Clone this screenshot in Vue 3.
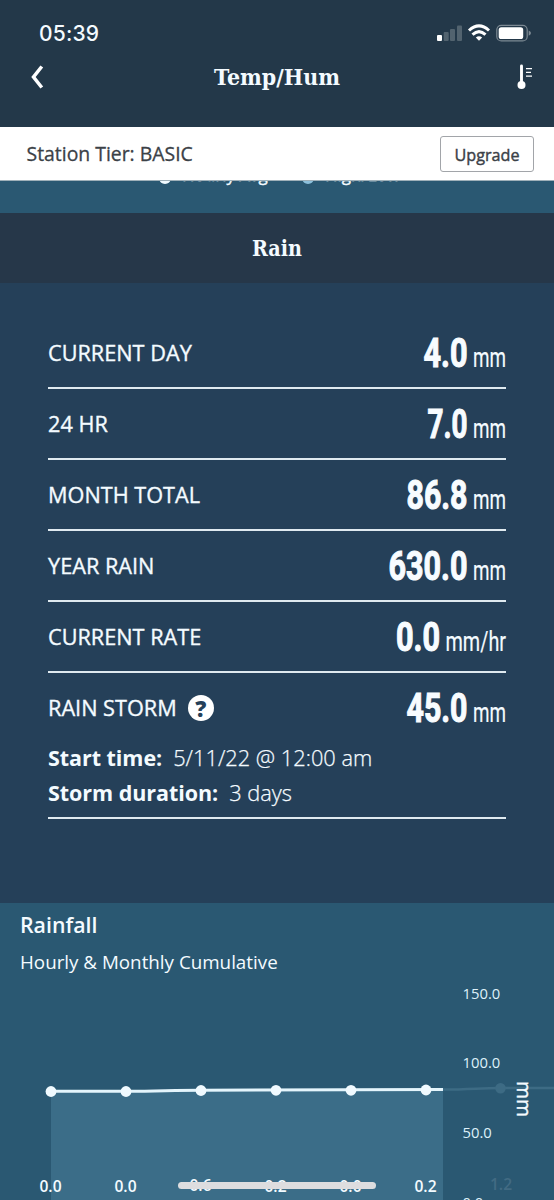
<template>
  <div class="screen">
    <header class="top-bar">
      <div class="status-bar">
        <span class="clock">05:39</span>
        <svg class="status-icons" width="96" height="20" viewBox="0 0 96 20">
          <rect x="1" y="12" width="5" height="6" rx="1" fill="#fff" />
          <rect x="7.7" y="9" width="5" height="9" rx="1" fill="#52636f" />
          <rect x="14" y="6" width="5" height="12" rx="1" fill="#52636f" />
          <rect x="21" y="2.500" width="5" height="15.500" rx="1" fill="#52636f" />
          <g fill="none" stroke="#fff" stroke-width="3">
            <path d="M33 7.500Q43 -1.700 53 7.500" />
            <path d="M36.500 11.600Q43 5.500 49.500 11.600" />
          </g>
          <path d="M39.800 14.500Q43 12 46.200 14.500L43 17.800Z" fill="#fff" />
          <rect x="60.800" y="2.300" width="30.400" height="15.600" rx="4.500" fill="none" stroke="#7c8993" stroke-width="1.200" />
          <rect x="62.700" y="4.200" width="24.500" height="11.800" rx="2.600" fill="#fff" />
          <path d="M92.700 7.500Q95 8.500 95 10Q95 11.800 92.700 12.800Z" fill="#7c8993" />
        </svg>
      </div>
      <nav class="nav-bar">
        <svg class="back" width="14" height="24" viewBox="0 0 14 24">
          <path d="M11.800 1.500L3.500 12L11.800 22.500" fill="none" stroke="#fff" stroke-width="3.500" />
        </svg>
        <svg class="title" width="128" height="32" viewBox="0 0 128 32">
          <text x="1" y="24" textLength="126" lengthAdjust="spacingAndGlyphs">Temp/Hum</text>
        </svg>
        <svg class="thermo" width="16" height="26" viewBox="0 0 16 26">
          <path d="M4.500 2V21" stroke="#fff" stroke-width="2.900" stroke-linecap="round" />
          <circle cx="4.500" cy="21" r="4" fill="#fff" />
          <path d="M9 4.700H15M9 8.400H14M9 12.200H15" stroke="#fff" stroke-width="1.300" />
        </svg>
      </nav>
    </header>

    <div class="tier-bar">
      <span class="tier">Station Tier: BASIC</span>
      <button type="button" class="upgrade">Upgrade</button>
    </div>

    <!-- bottom of the temp/hum chart, scrolled under the tier bar -->
    <div class="prev-chart">
      <div class="legend">
        <span class="dot"></span><span class="first">Hourly Avg</span>
        <span class="dot range"></span><span>High/Low</span>
      </div>
    </div>

    <h2 class="section-title">
      <svg width="52" height="32" viewBox="0 0 52 32">
        <text x="1" y="24" textLength="50" lengthAdjust="spacingAndGlyphs">Rain</text>
      </svg>
    </h2>

    <section class="rain">
      <div v-for="row in rows" :key="row.label" class="row" :class="{ storm: row.help }">
        <span class="label">{{ row.label }}</span>
        <span v-if="row.help" class="help">?</span>
        <svg class="reading" width="140" height="52" viewBox="0 0 140 52">
          <text class="num" :x="134.5 - row.unitWidth" y="41" text-anchor="end" :textLength="row.width"
            lengthAdjust="spacingAndGlyphs">{{ row.value }}</text>
          <text class="unit" x="140" y="41" text-anchor="end" :textLength="row.unitWidth"
            lengthAdjust="spacingAndGlyphs">{{ row.unit }}</text>
        </svg>
      </div>
      <div class="storm-info">
        <p><b>Start time:</b><span>5/11/22 @ 12:00 am</span></p>
        <p><b>Storm duration:</b><span>3 days</span></p>
      </div>
    </section>

    <section class="chart">
      <h3>Rainfall</h3>
      <p>Hourly &amp; Monthly Cumulative</p>
      <svg class="plot" width="554" height="220" viewBox="0 980 554 220">
        <path d="M443 1089.500C470 1089.500 480 1088 500 1088H554" class="faded-line" />
        <circle cx="500.500" cy="1088.300" r="5.300" fill="#3d6b84" />
        <text x="501" y="1190" class="bar-label faded">1.2</text>
        <path d="M51 1091H126C160 1091 170 1090 201 1090H443V1200H51Z" fill="#3b6d88" />
        <path d="M51 1091.300H126C160 1091.300 170 1090.300 201 1090.300L443 1089.500" class="line" />
        <g v-for="p in points" :key="p.x">
          <circle :cx="p.x" :cy="p.y" r="5.400" fill="#f0faff" />
          <text :x="p.x - 0.5" :y="p.labelY" class="bar-label">{{ p.value }}</text>
        </g>
        <text v-for="t in ticks" :key="t.y" x="462.500" :y="t.y" class="tick">{{ t.text }}</text>
        <text class="axis" transform="translate(516.500 1081) rotate(90)" textLength="36"
          lengthAdjust="spacingAndGlyphs">mm</text>
      </svg>
    </section>
    <div class="home-indicator"></div>
  </div>
</template>

<script setup>
// width / unitWidth squeeze the readings into the condensed look
const rows = [
  { label: 'CURRENT DAY', value: '4.0', unit: 'mm', width: 44, unitWidth: 33 },
  { label: '24 HR', value: '7.0', unit: 'mm', width: 40, unitWidth: 33 },
  { label: 'MONTH TOTAL', value: '86.8', unit: 'mm', width: 61, unitWidth: 33 },
  { label: 'YEAR RAIN', value: '630.0', unit: 'mm', width: 79, unitWidth: 33 },
  { label: 'CURRENT RATE', value: '0.0', unit: 'mm/hr', width: 44, unitWidth: 60.5 },
  { label: 'RAIN STORM', value: '45.0', unit: 'mm', width: 61, unitWidth: 33, help: true },
]

const points = [
  { x: 51, y: 1091.5, value: '0.0', labelY: 1191.5 },
  { x: 126, y: 1091.5, value: '0.0', labelY: 1191.5 },
  { x: 201, y: 1090.5, value: '0.6', labelY: 1190.5 },
  { x: 276, y: 1090.3, value: '0.2', labelY: 1191.5 },
  { x: 351, y: 1090.3, value: '0.0', labelY: 1191.5 },
  { x: 426, y: 1090, value: '0.2', labelY: 1191.5 },
]

const ticks = [
  { y: 998.5, text: '150.0' },
  { y: 1068, text: '100.0' },
  { y: 1138, text: '50.0' },
  { y: 1207.5, text: '0.0' },
]
</script>

<style>
body {
  margin: 0;
}
</style>

<style scoped>
.screen {
  position: relative;
  width: 554px;
  height: 1200px;
  overflow: hidden;
  display: flex;
  flex-direction: column;
  background: #254059;
  color: #f4fbff;
  font-family: "Open Sans", "Noto Sans", sans-serif;
}

svg {
  display: block;
  overflow: visible;
}

.top-bar {
  box-sizing: border-box;
  height: 127px;
  padding-top: 20px;
  background: #233849;
}

.status-bar {
  display: flex;
  justify-content: space-between;
  height: 27px;
  padding: 0 22px 0 39px;
}

.clock {
  font: 500 21px/27px Inter, sans-serif;
  letter-spacing: 0.2px;
}

.status-icons {
  margin-top: 3px;
}

.nav-bar {
  display: flex;
  align-items: center;
  justify-content: space-between;
  height: 60px;
  padding: 0 21px 0 30px;
}

.title text,
.section-title text {
  fill: #f4fbff;
  font: bold 22px "DejaVu Serif", serif;
}

.title {
  margin-right: 8px;
}

.tier-bar {
  box-sizing: border-box;
  display: flex;
  align-items: center;
  justify-content: space-between;
  height: 54px;
  padding: 0 20px 0 26.5px;
  background: #fff;
  border-bottom: 1px solid #9fb0b9;
  color: #3b4147;
  z-index: 1;
}

.tier {
  font-size: 19.4px;
  -webkit-text-stroke: 0.3px;
}

.upgrade {
  box-sizing: border-box;
  width: 94px;
  height: 36px;
  padding: 2px 0 0;
  border: 1px solid #a2a5a9;
  border-radius: 3px;
  background: #fff;
  color: #3b4147;
  font: 16.2px "Open Sans", sans-serif;
  -webkit-text-stroke: 0.4px;
}

.prev-chart {
  height: 32px;
  overflow: hidden;
  background: #2a5872;
}

.legend {
  display: flex;
  align-items: center;
  height: 22px;
  margin-top: -17px;
  padding-left: 159px;
  font-size: 17px;
  line-height: 22px;
  -webkit-text-stroke: 0.4px;
}

.first {
  width: 120px;
}

.dot {
  width: 12px;
  height: 12px;
  margin-top: 5px;
  margin-right: 11px;
  border-radius: 50%;
  background: #f0faff;
}

.dot.range {
  background: #8cc0dc;
}

.section-title {
  display: flex;
  align-items: center;
  justify-content: center;
  height: 70px;
  margin: 0;
  background: #263749;
}

.rain {
  box-sizing: border-box;
  height: 620px;
  padding: 35px 48px 0;
}

.row {
  box-sizing: border-box;
  display: flex;
  align-items: center;
  height: 71px;
  border-bottom: 2px solid #e0eaf0;
}

.row.storm {
  height: 69px;
  border-bottom: none;
}

.label {
  font-size: 21.7px;
  -webkit-text-stroke: 0.35px;
}

.help {
  width: 26px;
  margin-left: 11px;
  border-radius: 50%;
  background: #fff;
  color: #254059;
  font-size: 22px;
  font-weight: 800;
  line-height: 26px;
  text-align: center;
}

.reading {
  margin-left: auto;
  margin-bottom: 2px;
}

.num {
  fill: #f8fcff;
  stroke: #f8fcff;
  stroke-width: 1.1px;
  font: 700 40px Roboto, sans-serif;
}

.unit {
  fill: #f4fbff;
  stroke: #f4fbff;
  stroke-width: 0.2px;
  font: 400 27px Roboto, sans-serif;
}

.storm-info {
  box-sizing: border-box;
  height: 79px;
  margin-top: -2px;
  border-bottom: 2px solid #e0eaf0;
}

.storm-info p {
  margin: 0;
  font-size: 21.5px;
  line-height: 35px;
}

.storm-info b {
  letter-spacing: -0.05px;
}

.storm-info span {
  margin-left: 11px;
  font-size: 21.8px;
  font-weight: 300;
  -webkit-text-stroke: 0.25px;
}

.chart {
  height: 297px;
  background: #2a5872;
}

.chart h3 {
  margin: 0;
  padding: 7px 20px 0;
  font-size: 21.3px;
  font-weight: 600;
  line-height: 30px;
}

.chart p {
  margin: 0;
  padding: 9px 20px 5px;
  font-size: 18.8px;
  line-height: 26px;
}

.line {
  fill: none;
  stroke: #e4f5fc;
  stroke-width: 3;
}

.faded-line {
  fill: none;
  stroke: #3d6b84;
  stroke-width: 2.5;
}

.bar-label {
  fill: #f4fbff;
  font-size: 15.6px;
  font-weight: 600;
  text-anchor: middle;
}

.bar-label.faded {
  fill: #426b83;
}

.tick {
  fill: #dff2fb;
  font-size: 14.8px;
}

.axis {
  fill: #f4fbff;
  stroke: #f4fbff;
  stroke-width: 0.4px;
  font-size: 20px;
}

.home-indicator {
  position: absolute;
  left: 178px;
  top: 1182px;
  width: 198px;
  height: 7px;
  border-radius: 4px;
  background: #dddddf;
}
</style>
